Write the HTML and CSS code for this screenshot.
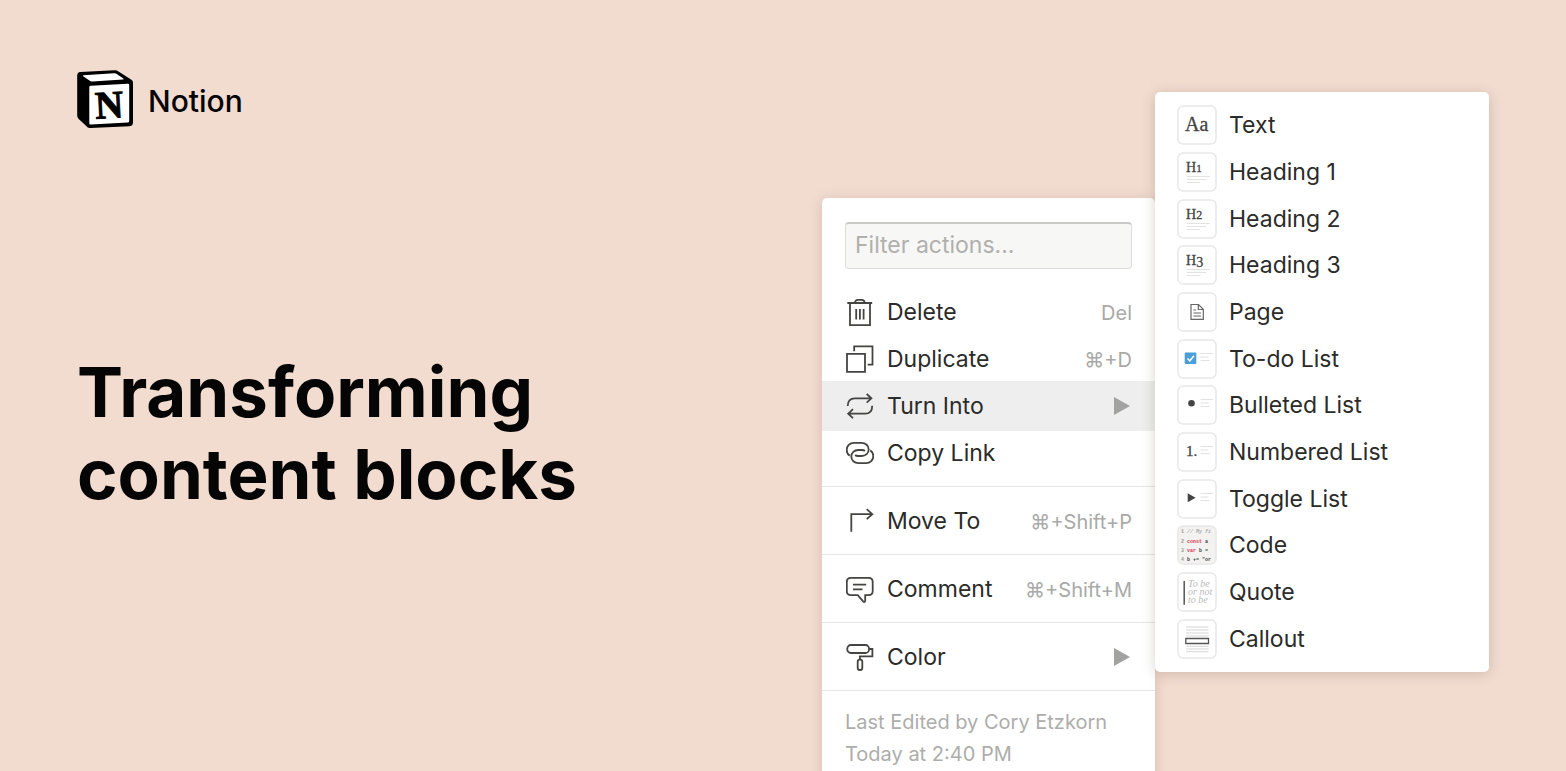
FILE: index.html
```
<!DOCTYPE html>
<html lang="en">
<head>
  <meta charset="UTF-8" />
  <meta name="viewport" content="width=device-width, initial-scale=1.0"/>
  <title>Notion - Transforming content blocks</title>
  <link rel="stylesheet" href="styles.css">
</head>
<body>
  <main class="page">
    <section class="hero">
      <div class="brand">
        <svg class="logo" viewBox="0 0 56 58" aria-hidden="true">
          <path d="M3.5 2 37 .2c2-.1 3 .2 4.500 1.200L54 9.500c1.500 1 2 1.800 2 3.500v39.500c0 2.400-1.200 3.500-3.500 3.700L13.500 58c-2 .1-3-.4-4.200-1.900L1.700 49C.5 47.500.2 46.500.2 44.800V5.500C.2 3.500 1.300 2.200 3.500 2z"/>
          <path fill="#fff" d="M6.500 5.200 37 3.300c1.200-.1 2 .1 2.800.7l6.500 4.600c.6.5.5.8-.3.900l-30.500 1.900c-1.200.1-1.900-.1-2.700-.7L6.200 6.300c-.6-.5-.5-1 .3-1.100z"/>
          <path fill="#fff" d="M14 15.800 50.500 13.700c1.200 0 1.700.4 1.700 1.600v35.400c0 1.200-.5 1.700-1.700 1.800L14 54.600c-1.200 0-1.700-.5-1.700-1.700V17.500c0-1.200.5-1.700 1.700-1.700z"/>
          <text class="logo-letter" x="18" y="48" transform="rotate(-3 32 35)">N</text>
        </svg>
        <span class="brand-name">Notion</span>
      </div>
      <h1>Transforming<br>content blocks</h1>
    </section>

    <div class="menus">
      <div class="menu">
        <input class="filter" type="text" placeholder="Filter actions..." aria-label="Filter actions">
        <div class="group">
          <button class="item">
            <svg class="icon" viewBox="0 0 28 28"><path d="M1.300 5h24.900M4 5v22.200h20V5M9 5c0-2 1.200-3.200 3-3.200h3.600c1.800 0 3 1.200 3 3.200M10.200 11v10.500M13.900 11v10.500M17.600 11v10.500"/></svg>
            <span>Delete</span><kbd>Del</kbd>
          </button>
          <button class="item">
            <svg class="icon" viewBox="0 0 28 28"><path d="M1 8.800h18v18H1zM8.200 6.300v-5h18.300v18.400h-4.800"/></svg>
            <span>Duplicate</span><kbd>⌘+D</kbd>
          </button>
          <button class="item active">
            <svg class="icon" viewBox="0 0 28 28"><path d="M1.700 14c0-5 2.500-7.700 7-7.700h16.600M20.700 2l4.700 4.300-4.700 4.400M26.200 13.700c0 5-2.500 8-7 8H2.200M7 17.200l-4.800 4.500L7 26.200"/></svg>
            <span>Turn Into</span><svg class="arrow" viewBox="0 0 16 18"><path d="M0 0v18l16-9z"/></svg>
          </button>
          <button class="item">
            <svg class="icon" viewBox="0 0 28 28"><path d="M3.800 16.600C1.700 15.400.7 13.400.7 11c0-4 3-7.100 7.300-7.100h7.500c4.200 0 7.200 2.800 7.200 6.500s-3 6.600-7 6.600H12c-1.500 0-2.300-.4-2.900-1"/><path d="M24.200 11.400c2.100 1.200 3.100 3.200 3.100 5.600 0 4-3 7.100-7.300 7.100h-7.500c-4.200 0-7.200-2.800-7.200-6.500s3-6.600 7-6.600H16c1.500 0 2.300.4 2.900 1"/></svg>
            <span>Copy Link</span>
          </button>
        </div>
        <div class="group">
          <button class="item">
            <svg class="icon" viewBox="0 0 28 28"><path d="M5.300 24.700V7.200h21M20.700 2.200l5.600 5-5.600 5"/></svg>
            <span>Move To</span><kbd>⌘+Shift+P</kbd>
          </button>
        </div>
        <div class="group">
          <button class="item">
            <svg class="icon" viewBox="0 0 28 28"><path d="M5 2.800h17.500c2.700 0 4.200 1.500 4.200 4.200v9c0 2.700-1.500 4.200-4.200 4.200h-3.300v5.600c0 1.300-1 1.600-1.900.8l-5.500-6.400H5C2.300 20.200.8 18.700.8 16V7c0-2.700 1.500-4.200 4.200-4.200zM7 9.700h13.200M7 14.300h9.500"/></svg>
            <span>Comment</span><kbd>⌘+Shift+M</kbd>
          </button>
        </div>
        <div class="group">
          <button class="item">
            <svg class="icon" viewBox="0 0 28 28"><rect x="1.300" y="2" width="21.700" height="8" rx="3.500"/><path d="M23 6h3.400v7.400H13.900v3.300"/><rect x="11.700" y="16.700" width="4.600" height="10.300" rx="2"/></svg>
            <span>Color</span><svg class="arrow" viewBox="0 0 16 18"><path d="M0 0v18l16-9z"/></svg>
          </button>
        </div>
        <div class="group edited">Last Edited by Cory Etzkorn<br>Today at 2:40 PM</div>
      </div>

      <div class="submenu">
        <button class="item">
          <svg class="thumb" viewBox="0 0 40 40"><rect class="tile" x="1" y="1" width="38" height="38" rx="5"/><text class="serif" x="8" y="26" font-size="20">Aa</text></svg>
          <span>Text</span>
        </button>
        <button class="item">
          <svg class="thumb" viewBox="0 0 40 40"><rect class="tile" x="1" y="1" width="38" height="38" rx="5"/><text class="serif" x="9" y="20" font-size="14">H<tspan font-size="11">1</tspan></text><path class="lines" d="M10 24.500h23M10 27.500h19M10 30.500h13"/></svg>
          <span>Heading 1</span>
        </button>
        <button class="item">
          <svg class="thumb" viewBox="0 0 40 40"><rect class="tile" x="1" y="1" width="38" height="38" rx="5"/><text class="serif" x="9" y="20" font-size="14">H<tspan font-size="12">2</tspan></text><path class="lines" d="M10 24.500h23M10 27.500h19M10 30.500h13"/></svg>
          <span>Heading 2</span>
        </button>
        <button class="item">
          <svg class="thumb" viewBox="0 0 40 40"><rect class="tile" x="1" y="1" width="38" height="38" rx="5"/><text class="serif" x="9" y="20" font-size="14">H<tspan font-size="14" dy="2">3</tspan></text><path class="lines" d="M10 24.500h23M10 27.500h19M10 30.500h13"/></svg>
          <span>Heading 3</span>
        </button>
        <button class="item">
          <svg class="thumb" viewBox="0 0 40 40"><rect class="tile" x="1" y="1" width="38" height="38" rx="5"/><path class="doc" d="M14 12.500h7.500l4.800 4.800v10H14zM21.300 12.500v5h5M16.500 18h2.500M16.500 21h7.500M16.500 24h7.500"/></svg>
          <span>Page</span>
        </button>
        <button class="item">
          <svg class="thumb" viewBox="0 0 40 40"><rect class="tile" x="1" y="1" width="38" height="38" rx="5"/><rect x="7.700" y="13.500" width="11.600" height="11.500" rx="1" fill="#4a9fd8"/><path d="M10.500 19.500l2.300 2.300 4.200-5" fill="none" stroke="#fff" stroke-width="1.500"/><path class="lines" d="M23.500 14.500H36M23.500 18h8M23.500 21.500h9"/></svg>
          <span>To-do List</span>
        </button>
        <button class="item">
          <svg class="thumb" viewBox="0 0 40 40"><rect class="tile" x="1" y="1" width="38" height="38" rx="5"/><circle cx="14.500" cy="18.300" r="3.300" fill="#444"/><path class="lines" d="M23.500 14.500H36M23.500 18h8M23.500 21.500h9"/></svg>
          <span>Bulleted List</span>
        </button>
        <button class="item">
          <svg class="thumb" viewBox="0 0 40 40"><rect class="tile" x="1" y="1" width="38" height="38" rx="5"/><text class="serif" x="9" y="24" font-size="15">1.</text><path class="lines" d="M23.500 14.500H36M23.500 18h8M23.500 21.500h9"/></svg>
          <span>Numbered List</span>
        </button>
        <button class="item">
          <svg class="thumb" viewBox="0 0 40 40"><rect class="tile" x="1" y="1" width="38" height="38" rx="5"/><path d="M10.700 14.300v9l7.900-4.500z" fill="#444"/><path class="lines" d="M23.500 14.500H36M23.500 18h8M23.500 21.500h9"/></svg>
          <span>Toggle List</span>
        </button>
        <button class="item">
          <svg class="thumb" viewBox="0 0 40 40"><rect class="tile code-tile" x="1" y="1" width="38" height="38" rx="5"/>
            <g class="code">
              <text class="num" x="4" y="8">1</text><text class="note" x="10" y="8">// My fi</text>
              <text class="num" x="4" y="18">2</text><text x="10" y="18"><tspan class="key">const</tspan> a</text>
              <text class="num" x="4" y="27">3</text><text x="10" y="27"><tspan class="key">var</tspan> b =</text>
              <text class="num" x="4" y="36">4</text><text x="10" y="36">b += "or</text>
            </g>
          </svg>
          <span>Code</span>
        </button>
        <button class="item">
          <svg class="thumb" viewBox="0 0 40 40"><rect class="tile" x="1" y="1" width="38" height="38" rx="5"/><path d="M7.200 9v23.700" stroke="#555" stroke-width="1.500"/><g class="quote"><text x="11" y="15">To be</text><text x="11" y="23">or not</text><text x="11" y="31">to be</text></g></svg>
          <span>Quote</span>
        </button>
        <button class="item">
          <svg class="thumb" viewBox="0 0 40 40"><rect class="tile" x="1" y="1" width="38" height="38" rx="5"/><path class="lines dark" d="M9 8h22.500M9 11h22.500M9 14h22.500M9 17h22.500M9 27.300h22.500M9 30h22.500M9 32.700h22.500"/><path d="M8.800 19.500h22.700v5H8.800z" fill="#fff" stroke="#555" stroke-width="1.300"/></svg>
          <span>Callout</span>
        </button>
      </div>
    </div>
  </main>
</body>
</html>
```
FILE: styles.css
```
* { box-sizing: border-box; }
body { margin: 0; background: #f2dcd0; font-family: "Inter", sans-serif; color: #2b2b29; }
.page { display: flex; justify-content: space-between; height: 100vh; padding: 0 77px; overflow: hidden; }

.hero { padding-top: 70px; color: #050505; }
.brand { display: flex; align-items: center; gap: 15px; }
.logo { width: 56px; height: 58px; }
.logo-letter { font: bold 39px "Liberation Serif", serif; stroke: #000; stroke-width: 1; }
.brand-name { padding-top: 3px; font-size: 30px; font-weight: 500; line-height: 40px; }
h1 { margin: 223px 0 0; font-size: 69px; font-weight: 700; line-height: 82px; }

.menus { display: flex; align-items: flex-start; flex-shrink: 0; }
.menu { width: 333px; margin-top: 198px; padding-top: 24px; background: #fff; border-radius: 5px 5px 0 0; box-shadow: 0 2px 14px rgba(80, 30, 10, 0.16); }
.submenu { position: relative; display: grid; grid-auto-rows: 1fr; width: 334px; min-height: 580px; margin-top: 92px; padding: 10px 0; background: #fff; border-radius: 5px; box-shadow: 0 2px 14px rgba(50, 25, 10, 0.18); }

.filter { display: block; width: calc(100% - 46px); height: 47px; margin: 0 23px 19px; padding: 0 9px 2px; font: 23px "Inter", sans-serif; background: #f7f7f5; border: 1px solid #dcdcda; border-top: 2px solid #c9c9c7; border-radius: 4px; }
.filter::placeholder { color: #b0b0ae; opacity: 1; }

.group { padding: 10px 0; border-top: 1px solid #e6e6e5; }
.filter + .group { padding: 0 0 10px; border-top: none; }
.item { display: flex; align-items: center; width: 100%; padding: 0 23px 0 24px; font: 23px "Inter", sans-serif; color: inherit; text-align: left; background: none; border: none; cursor: pointer; }
.menu .item { height: 47px; }
.menu .active { height: 50px; margin: -1px 0 -2px; background: #eee; }
.icon { width: 28px; height: 28px; margin-right: 13px; fill: none; stroke: #444442; stroke-width: 1.8; }
kbd { margin-left: auto; padding-top: 2px; font: 20px "Inter", sans-serif; color: #a9a9a7; }
.arrow { width: 16px; height: 18px; margin: 0 2px 0 auto; fill: #a2a2a1; }
.edited { padding: 15px 23px; font-size: 20px; line-height: 32px; color: #adadab; }

.submenu .item { padding: 0 22px; }
.thumb { width: 40px; height: 40px; margin-right: 12px; }
.tile { fill: #fff; stroke: #e8e8e7; stroke-width: 1.5; }
.code-tile { fill: #f3f2f1; }
.serif { font-family: "Liberation Serif", serif; fill: #444; stroke: #444; stroke-width: 0.3; }
.lines { fill: none; stroke: #e2e2e1; stroke-width: 1; }
.dark { stroke: #d5d5d4; }
.doc { fill: none; stroke: #666; stroke-width: 1.2; }
.code { font: bold 5px "Liberation Mono", monospace; fill: #444; }
.num { fill: #999; }
.note { fill: #aaa; font-style: italic; }
.key { fill: #d23c55; }
.quote { font: italic 10px "Liberation Serif", serif; fill: #bbb; }
```
